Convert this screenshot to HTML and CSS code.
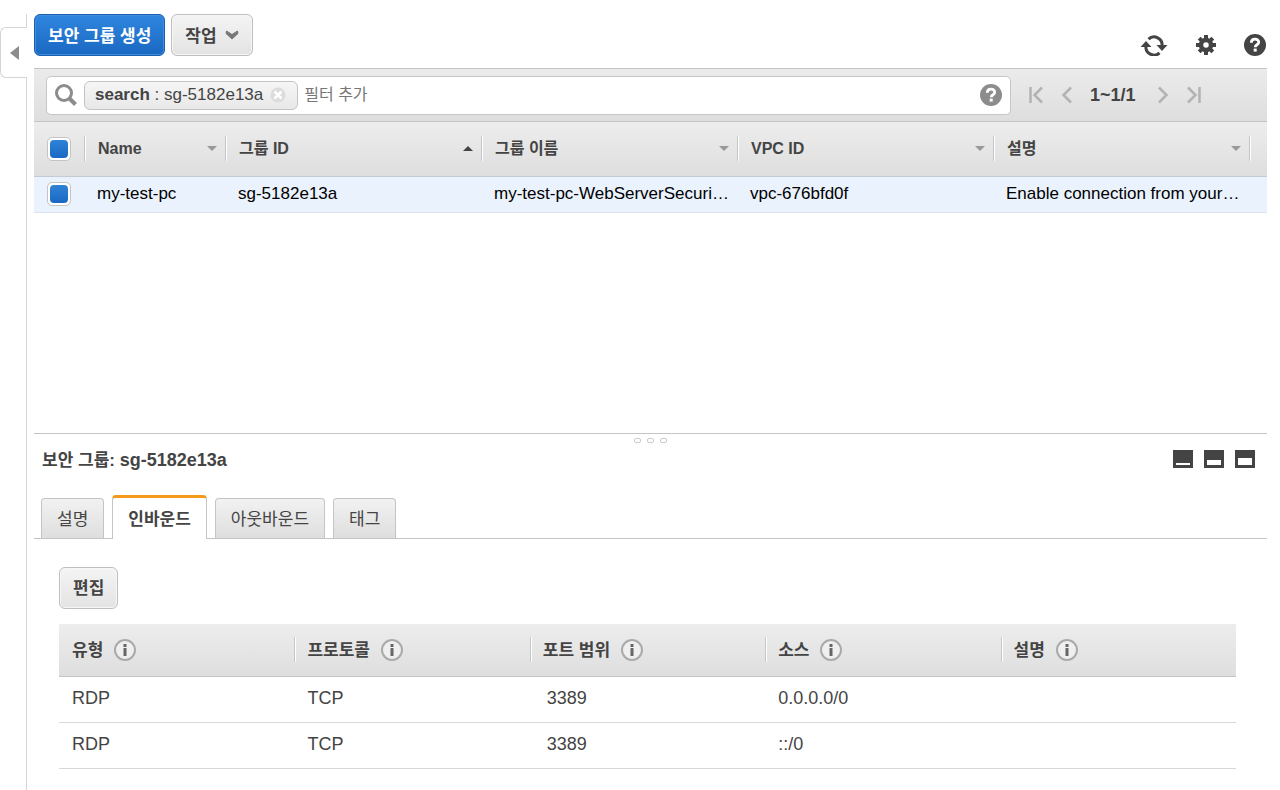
FILE: index.html
```html
<!DOCTYPE html>
<html lang="ko">
    <head>
        <meta charset="utf-8">
        <title>보안 그룹</title>
        <link rel="stylesheet" href="styles.css">
    </head>
    <body>
        <aside class="sidebar">
            <button class="collapse" type="button" aria-label="메뉴 접기">
                <svg width="9" height="14" viewBox="0 0 9 14"><path d="M9 0v14L0 7z" fill="#8c8c8c"/></svg>
            </button>
        </aside>

        <main>
            <header class="toolbar">
                <button class="btn primary" type="button">보안 그룹 생성</button>
                <button class="btn" type="button">작업
                    <svg class="caret" width="14" height="10" viewBox="0 0 14 10"><path d="M1.500 1L7 4.500 12.500 1 13 3.500 7 9 1 3.500z" fill="#777" stroke="#777"/></svg>
                </button>
                <div class="tools">
                    <button class="icon" type="button" aria-label="새로 고침">
                        <svg width="28" height="22" viewBox="0 0 28 22">
                            <path d="M8.500 5.200A8 8 0 0 1 22 12M19.500 18.800A8 8 0 0 1 6 12" fill="none" stroke="#444" stroke-width="3"/>
                            <path d="M16.500 11H27.500L22 17zM.5 13H11.500L6 7z" fill="#444"/>
                        </svg>
                    </button>
                    <button class="icon" type="button" aria-label="설정">
                        <svg width="20" height="20" viewBox="0 0 20 20">
                            <path d="M10 0v20M0 10h20M3.200 3.200l13.600 13.600M16.800 3.200L3.200 16.800" stroke="#444" stroke-width="4"/>
                            <circle cx="10" cy="10" r="5" fill="#fff" stroke="#444" stroke-width="4.500"/>
                        </svg>
                    </button>
                    <button class="icon" type="button" aria-label="도움말">
                        <svg width="22" height="22" viewBox="0 0 22 22">
                            <circle cx="11" cy="11" r="11" fill="#444"/>
                            <path d="M7.300 8.700C7.300 3.800 14.700 4 14.700 8.200c0 2.600-3.500 2.500-3.500 5" fill="none" stroke="#fff" stroke-width="2.800"/>
                            <path d="M9.700 14.600h3v3h-3z" fill="#fff"/>
                        </svg>
                    </button>
                </div>
            </header>

            <div class="filter-bar">
                <div class="search">
                    <svg width="24" height="24" viewBox="0 0 24 24">
                        <circle cx="10" cy="10" r="7.500" fill="none" stroke="#8c8c8c" stroke-width="3"/>
                        <path d="M15.500 15.500l6 6" stroke="#8c8c8c" stroke-width="4"/>
                    </svg>
                    <span class="token">
                        <span><b>search</b> : sg-5182e13a</span>
                        <button class="icon" type="button" aria-label="필터 제거">
                            <svg width="16" height="16" viewBox="0 0 16 16">
                                <circle cx="8" cy="8" r="7.500" fill="#dcdcdc"/>
                                <path d="M4.500 4.500l7 7M11.500 4.500l-7 7" stroke="#fff" stroke-width="2.500"/>
                            </svg>
                        </button>
                    </span>
                    <input type="text" placeholder="필터 추가" aria-label="필터 추가">
                    <button class="icon" type="button" aria-label="검색 도움말">
                        <svg width="22" height="22" viewBox="0 0 22 22">
                            <circle cx="11" cy="11" r="11" fill="#8c8c8c"/>
                            <path d="M7.300 8.700C7.300 3.800 14.700 4 14.700 8.200c0 2.600-3.500 2.500-3.500 5" fill="none" stroke="#fff" stroke-width="2.800"/>
                            <path d="M9.700 14.600h3v3h-3z" fill="#fff"/>
                        </svg>
                    </button>
                </div>
                <nav class="pager">
                    <button class="icon" type="button" aria-label="처음">
                        <svg width="14" height="18" viewBox="0 0 14 18"><path d="M1.500 1v16M13 1.500L5.500 9l7.500 7.500" fill="none" stroke="#b3b3b3" stroke-width="2.500"/></svg>
                    </button>
                    <button class="icon" type="button" aria-label="이전">
                        <svg width="11" height="18" viewBox="0 0 11 18"><path d="M10 1.500L2.500 9l7.500 7.500" fill="none" stroke="#b3b3b3" stroke-width="2.500"/></svg>
                    </button>
                    <span>1~1/1</span>
                    <button class="icon" type="button" aria-label="다음">
                        <svg width="11" height="18" viewBox="0 0 11 18"><path d="M1 1.500L8.500 9 1 16.500" fill="none" stroke="#b3b3b3" stroke-width="2.500"/></svg>
                    </button>
                    <button class="icon" type="button" aria-label="마지막">
                        <svg width="14" height="18" viewBox="0 0 14 18"><path d="M12.500 1v16M1 1.500L8.500 9 1 16.500" fill="none" stroke="#b3b3b3" stroke-width="2.500"/></svg>
                    </button>
                </nav>
            </div>

            <section class="list">
                <table class="groups">
                    <colgroup>
                        <col class="col-check">
                        <col class="col-name">
                        <col>
                        <col>
                        <col>
                        <col>
                        <col class="col-end">
                    </colgroup>
                    <thead>
                        <tr>
                            <th><input type="checkbox" checked aria-label="모두 선택"></th>
                            <th><button class="sort" type="button">Name</button></th>
                            <th><button class="sort asc" type="button">그룹 ID</button></th>
                            <th><button class="sort" type="button">그룹 이름</button></th>
                            <th><button class="sort" type="button">VPC ID</button></th>
                            <th><button class="sort" type="button">설명</button></th>
                            <th></th>
                        </tr>
                    </thead>
                    <tbody>
                        <tr>
                            <td><input type="checkbox" checked aria-label="my-test-pc 선택"></td>
                            <td>my-test-pc</td>
                            <td>sg-5182e13a</td>
                            <td>my-test-pc-WebServerSecuri…</td>
                            <td>vpc-676bfd0f</td>
                            <td>Enable connection from your…</td>
                            <td></td>
                        </tr>
                    </tbody>
                </table>
            </section>

            <section class="detail">
                <div class="splitter"><i></i><i></i><i></i></div>
                <div class="detail-head">
                    <h2>보안 그룹: <span>sg-5182e13a</span></h2>
                    <div class="panes">
                        <button class="icon" type="button" aria-label="패널 최소화">
                            <svg width="20" height="18" viewBox="0 0 20 18"><path d="M0 0h20v18H0z" fill="#444"/><path d="M3 13h14v2H3z" fill="#fff"/></svg>
                        </button>
                        <button class="icon" type="button" aria-label="패널 절반">
                            <svg width="20" height="18" viewBox="0 0 20 18"><path d="M0 0h20v18H0z" fill="#444"/><path d="M3 10h14v5H3z" fill="#fff"/></svg>
                        </button>
                        <button class="icon" type="button" aria-label="패널 최대화">
                            <svg width="20" height="18" viewBox="0 0 20 18"><path d="M0 0h20v18H0z" fill="#444"/><path d="M3 8h14v7H3z" fill="#fff"/></svg>
                        </button>
                    </div>
                </div>

                <div class="tabs" role="tablist">
                    <button type="button" role="tab">설명</button>
                    <button type="button" role="tab" class="active" aria-selected="true">인바운드</button>
                    <button type="button" role="tab">아웃바운드</button>
                    <button type="button" role="tab">태그</button>
                </div>

                <div class="panel">
                    <button class="btn" type="button">편집</button>
                    <table class="rules">
                        <thead>
                            <tr>
                                <th><div><span>유형</span> <svg class="info" viewBox="0 0 22 22"><circle cx="11" cy="11" r="10"/><path d="M9.500 5h3v3h-3zM9.500 9h3v8h-3z"/></svg></div></th>
                                <th><div><span>프로토콜</span> <svg class="info" viewBox="0 0 22 22"><circle cx="11" cy="11" r="10"/><path d="M9.500 5h3v3h-3zM9.500 9h3v8h-3z"/></svg></div></th>
                                <th><div><span>포트 범위</span> <svg class="info" viewBox="0 0 22 22"><circle cx="11" cy="11" r="10"/><path d="M9.500 5h3v3h-3zM9.500 9h3v8h-3z"/></svg></div></th>
                                <th><div><span>소스</span> <svg class="info" viewBox="0 0 22 22"><circle cx="11" cy="11" r="10"/><path d="M9.500 5h3v3h-3zM9.500 9h3v8h-3z"/></svg></div></th>
                                <th><div><span>설명</span> <svg class="info" viewBox="0 0 22 22"><circle cx="11" cy="11" r="10"/><path d="M9.500 5h3v3h-3zM9.500 9h3v8h-3z"/></svg></div></th>
                            </tr>
                        </thead>
                        <tbody>
                            <tr>
                                <td>RDP</td>
                                <td>TCP</td>
                                <td class="port">3389</td>
                                <td>0.0.0.0/0</td>
                                <td></td>
                            </tr>
                            <tr>
                                <td>RDP</td>
                                <td>TCP</td>
                                <td class="port">3389</td>
                                <td>::/0</td>
                                <td></td>
                            </tr>
                        </tbody>
                    </table>
                </div>
            </section>
        </main>
    </body>
</html>
```
FILE: styles.css
```css
* {
    box-sizing: border-box;
}

body {
    margin: 0;
    min-height: 100vh;
    display: flex;
    background: #fff;
    color: #444;
    font-family: "Liberation Sans", "Noto Sans CJK KR", sans-serif;
    font-size: 17px;
    line-height: 20px;
}

button, input {
    font: inherit;
    color: inherit;
}

svg {
    display: block;
    flex: none;
}

/* left strip with the collapse handle */
.sidebar {
    flex: none;
    width: 27px;
    margin-top: 14px;
    padding-top: 13px;
    border-right: 1px solid #d5d5d5;
}

.collapse {
    width: 27px;
    height: 51px;
    padding: 0 0 0 9px;
    border: 1px solid #d5d5d5;
    border-right: 0;
    border-radius: 6px 0 0 6px;
    background: #fff;
}

main {
    flex: 1;
    min-width: 0;
    display: flex;
    flex-direction: column;
    padding: 0 13px 0 7px;
}

.toolbar {
    display: flex;
    align-items: flex-start;
    gap: 6px;
    height: 68px;
    padding-top: 14px;
}

.btn {
    display: flex;
    align-items: center;
    gap: 8px;
    height: 42px;
    padding: 3px 13px 0;
    border: 1px solid #bfbfbf;
    border-radius: 6px;
    background: linear-gradient(#f4f4f4, #e3e3e3);
    box-shadow: inset 0 0 0 1px #f6f6f6;
    font-weight: bold;
}

.primary {
    border-color: #1a5fb0;
    background: linear-gradient(#2f86de, #1a68c2);
    box-shadow: inset 0 0 0 1px #3f8edc;
    color: #fff;
}

.caret {
    margin-bottom: 4px;
}

.icon {
    padding: 0;
    border: 0;
    background: none;
}

.tools {
    display: flex;
    align-items: center;
    gap: 28px;
    margin-left: auto;
    padding: 20px 1px 0 0;
}

.filter-bar {
    display: flex;
    align-items: center;
    height: 54px;
    padding-left: 12px;
    border-top: 1px solid #c4c4c4;
    border-bottom: 1px solid #c4c4c4;
    background: linear-gradient(#ebebeb, #dedede);
}

.search {
    flex: 1;
    display: flex;
    align-items: center;
    gap: 6px;
    height: 39px;
    padding: 0 8px 0 7px;
    border: 1px solid #c6c6c6;
    border-radius: 5px;
    background: #fff;
}

.search input {
    flex: 1;
    min-width: 0;
    padding: 0;
    border: 0;
    outline: 0;
    font-size: 16px;
}

.search input::placeholder {
    color: #777;
    opacity: 1;
}

.token {
    display: flex;
    align-items: center;
    gap: 7px;
    height: 29px;
    padding: 0 11px 0 10px;
    border: 1px solid #c4c4c4;
    border-radius: 6px;
    background: linear-gradient(#f6f6f6, #e8e8e8);
    white-space: nowrap;
}

.pager {
    display: flex;
    align-items: center;
    gap: 18px;
    width: 256px;
    padding-left: 18px;
    font-size: 18px;
    font-weight: bold;
}

.pager span {
    padding-right: 4px;
}

.list {
    flex: 1;
}

table {
    width: 100%;
    table-layout: fixed;
    border-collapse: collapse;
}

th, td {
    padding: 0 0 0 13px;
    text-align: left;
    white-space: nowrap;
}

thead {
    background: linear-gradient(#ededed, #dedede);
}

/* short two-tone divider between header cells */
th + th {
    background: linear-gradient(90deg, #c6c6c6 50%, #fff 50%) 0 50% / 2px 25px no-repeat;
}

.col-check {
    width: 50px;
}

.col-name {
    width: 141px;
}

.col-end {
    width: 18px;
}

.groups th {
    height: 54px;
    border-bottom: 1px solid #c6cbd2;
}

.groups td {
    height: 36px;
    border-bottom: 1px solid #dde4ec;
    background: #eaf2fe;
    color: #000;
}

.sort {
    display: flex;
    align-items: center;
    justify-content: space-between;
    width: 100%;
    padding: 0 8px 0 1px;
    border: 0;
    background: none;
    font-size: 16px;
    font-weight: bold;
}

.sort::after {
    content: "";
    border: 5px solid transparent;
    border-top-color: #999;
    border-bottom: 0;
}

.asc::after {
    border-top: 0;
    border-bottom: 5px solid #444;
}

input[type="checkbox"] {
    appearance: none;
    display: block;
    width: 24px;
    height: 24px;
    margin: 0;
    padding: 2px;
    border: 1px solid #c4c4c4;
    border-radius: 5px;
    background: #fff;
}

input[type="checkbox"]:checked::before {
    content: "";
    display: block;
    height: 18px;
    border-radius: 4px;
    background: linear-gradient(#2f82d8, #1a68c2);
}

.detail {
    border-top: 1px solid #c4c4c4;
    padding-bottom: 21px;
}

.splitter {
    display: flex;
    justify-content: center;
    gap: 6px;
    padding-top: 4px;
}

.splitter i {
    width: 7px;
    height: 5px;
    border: 1px solid #ccc;
    border-radius: 2px;
}

.detail-head {
    display: flex;
    align-items: center;
    justify-content: space-between;
    height: 32px;
    padding: 0 12px 0 8px;
}

h2 {
    margin: 0;
    padding-top: 4px;
    font-size: 17px;
}

h2 span {
    font-size: 18px;
}

.panes {
    display: flex;
    gap: 11px;
}

.tabs {
    display: flex;
    align-items: flex-end;
    gap: 8px;
    margin-top: 20px;
    padding-left: 7px;
    border-bottom: 1px solid #c4c4c4;
}

.tabs button {
    height: 40px;
    padding: 3px 15px 0;
    border: 1px solid #c4c4c4;
    border-bottom: 0;
    border-radius: 4px 4px 0 0;
    background: linear-gradient(#f2f2f2, #dedede);
}

.tabs .active {
    height: 44px;
    margin-bottom: -1px;
    border-top: 3px solid #f49a1a;
    background: #fff;
    font-weight: bold;
}

.panel {
    padding: 28px 31px 0 25px;
}

.rules {
    margin-top: 15px;
    font-size: 18px;
}

.rules th {
    height: 53px;
    border-bottom: 1px solid #c4c4c4;
    font-size: 17px;
}

.rules th div {
    display: flex;
    align-items: center;
    gap: 11px;
}

.rules th span {
    padding-top: 3px;
}

.rules td {
    height: 46px;
    padding-bottom: 3px;
    border-bottom: 1px solid #d8d8d8;
}

.rules .port {
    padding-left: 17px;
}

.info {
    width: 22px;
    height: 22px;
    fill: #666;
}

.info circle {
    fill: #efefef;
    stroke: #aaa;
    stroke-width: 2;
}
```
